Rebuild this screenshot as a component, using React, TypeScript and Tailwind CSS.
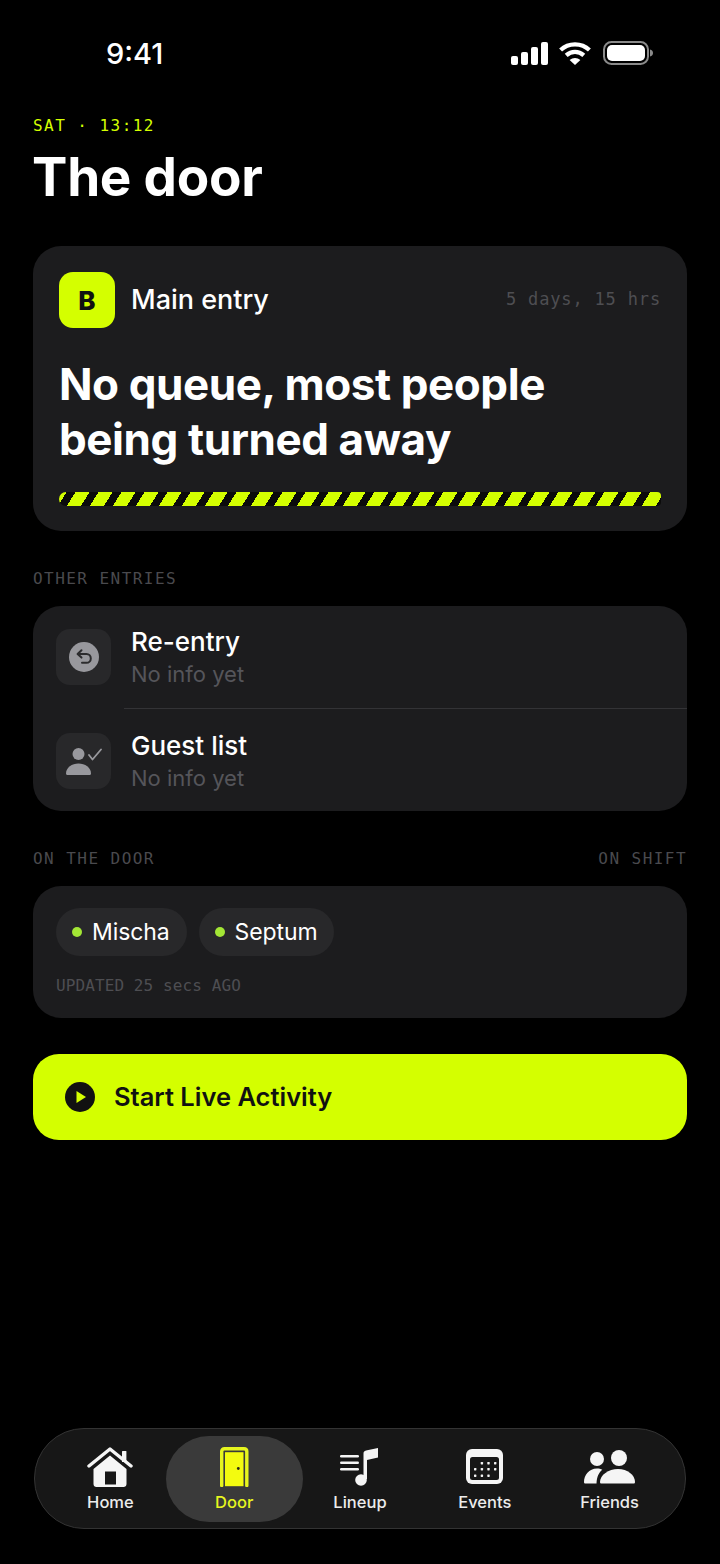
import React from "react";

const sans = "font-['Inter','Liberation_Sans',sans-serif]";
const mono = "font-['DejaVu_Sans_Mono','Liberation_Mono',monospace]";

const StatusIcons = () => (
  <div className="flex items-center gap-[11px]">
    <svg width="37" height="23" viewBox="0 0 37 23" fill="#fff">
      <rect x="0" y="14" width="7" height="9" rx="2" />
      <rect x="10" y="10" width="7" height="13" rx="2" />
      <rect x="20" y="5" width="7" height="18" rx="2" />
      <rect x="30" y="0" width="7" height="23" rx="2" />
    </svg>
    <svg width="32" height="23" viewBox="0 0 32 23" fill="none" stroke="#fff" strokeWidth="4.2">
      <path d="M1.6 8 C9.5 0.4 22.5 0.4 30.4 8" />
      <path d="M7.2 13.4 C12.4 8.6 19.6 8.6 24.8 13.4" />
      <path d="M16 23 L10.6 17.9 C13.8 15.2 18.2 15.2 21.4 17.9 Z" fill="#fff" stroke="none" />
    </svg>
    <svg width="50" height="24" viewBox="0 0 50 24" fill="none" className="ml-[1px]">
      <rect x="1" y="1" width="44" height="22" rx="7.5" stroke="#8a8a8a" strokeWidth="2" />
      <rect x="4" y="4" width="38" height="16" rx="5" fill="#fff" />
      <path d="M47 8.5 C49 9 50 10.4 50 12 C50 13.6 49 15 47 15.5 Z" fill="#8a8a8a" />
    </svg>
  </div>
);

const ReentryIcon = () => (
  <svg width="30" height="30" viewBox="0 0 30 30" fill="none">
    <circle cx="15" cy="15" r="15" fill="#98989d" />
    <path
      d="M12.5 8.2 L8.6 12 L12.5 15.6 M9 12 H17.4 C20 12 21.8 14 21.8 16.4 C21.8 18.9 20 20.8 17.4 20.8 H13"
      stroke="#2c2c2e"
      strokeWidth="2"
      strokeLinecap="round"
      strokeLinejoin="round"
    />
  </svg>
);

const GuestIcon = () => (
  <svg width="36" height="28" viewBox="0 0 36 28" fill="#98989d">
    <circle cx="12.5" cy="7" r="6" />
    <path d="M0 26.5 C0 20.5 6 16.5 12.5 16.5 C19 16.5 25 20.5 25 26.5 C25 27.4 24.5 28 23.5 28 H1.5 C0.5 28 0 27.4 0 26.5 Z" />
    <path d="M23 8 L26.5 12.5 L35 2.5" fill="none" stroke="#98989d" strokeWidth="1.8" strokeLinecap="round" strokeLinejoin="round" />
  </svg>
);

const HomeIcon = () => (
  <svg width="46" height="40" viewBox="0 0 46 40" fill="#f5f5f5">
    <path d="M2 19 L23 2 L44 19" fill="none" stroke="#f5f5f5" strokeWidth="3.4" strokeLinecap="round" strokeLinejoin="round" />
    <rect x="35" y="4" width="4.4" height="11" rx="0.5" />
    <path fillRule="evenodd" d="M23 8.5 L39.5 22 V37 C39.5 38.7 38.2 40 36.5 40 H9.5 C7.8 40 6.5 38.7 6.5 37 V22 Z M18 24.5 V37.5 H29 V24.5 Z" />
  </svg>
);

const DoorIcon = () => (
  <svg width="29" height="40" viewBox="0 0 29 40" fill="none">
    <path d="M1.7 38.5 V4.5 C1.7 2.8 2.8 1.7 4.5 1.7 H24 C25.7 1.7 26.8 2.8 26.8 4.5 V38.5" stroke="#e6f51f" strokeWidth="3.4" strokeLinecap="round" />
    <rect x="5" y="5.2" width="18.5" height="34" fill="#f3fb0f" />
    <circle cx="18.3" cy="21.5" r="1.4" fill="#2a2a1a" />
  </svg>
);

const LineupIcon = () => (
  <svg width="40" height="38" viewBox="0 0 40 38" fill="#f5f5f5">
    <rect x="0" y="7" width="19" height="2.4" rx="1.2" />
    <rect x="0" y="13.5" width="19" height="2.4" rx="1.2" />
    <rect x="0" y="20" width="19" height="2.4" rx="1.2" />
    <ellipse cx="21" cy="32" rx="5.8" ry="5.8" />
    <path d="M23.5 31 V5.5 C23.5 4 24.5 3 26 2.6 L38 0 V9.5 L27 12 V31 Z" />
  </svg>
);

const EventsIcon = () => {
  const dots = [
    [14.7, 13], [21.3, 13], [28, 13],
    [8, 19], [14.7, 19], [21.3, 19], [28, 19],
    [8, 25.5], [14.7, 25.5], [21.3, 25.5],
  ];
  return (
    <svg width="38" height="35" viewBox="0 0 38 35" fill="none">
      <rect x="0" y="0" width="37" height="35" rx="6" fill="#f5f5f5" />
      <rect x="4" y="8" width="29" height="23" rx="2.5" fill="#171717" />
      {dots.map(([x, y]) => (
        <rect key={`${x}-${y}`} x={x} y={y} width="2.4" height="2.4" rx="0.6" fill="#f5f5f5" />
      ))}
    </svg>
  );
};

const FriendsIcon = () => (
  <svg width="52" height="34" viewBox="0 0 52 34" fill="#f5f5f5">
    <circle cx="13" cy="9" r="7" />
    <circle cx="35" cy="8" r="8" />
    <path d="M0 32 C0 25 5 18.5 13 18.5 C15 18.5 16.8 19 18.3 19.8 C15 22.5 12.8 26.5 12.5 33.5 H1.5 C0.6 33.5 0 33 0 32 Z" />
    <path d="M16 32 C16 25 24.5 19 34 19 C43.5 19 51 25 51 32 C51 33 50.4 33.5 49.5 33.5 H17.5 C16.6 33.5 16 33 16 32 Z" />
  </svg>
);

const navItems = [
  { label: "Home", icon: <HomeIcon /> },
  { label: "Door", icon: <DoorIcon />, active: true },
  { label: "Lineup", icon: <LineupIcon /> },
  { label: "Events", icon: <EventsIcon /> },
  { label: "Friends", icon: <FriendsIcon /> },
];

const entries = [
  { name: "Re-entry", icon: <ReentryIcon />, row: "h-[102px]" },
  { name: "Guest list", icon: <GuestIcon />, row: "h-[103px] pt-[3px]" },
];

const App = () => {
  return (
    <div className={`${sans} min-h-[1564px] w-[720px] bg-black text-white flex flex-col`}>
      <div className="flex items-center justify-between h-[54px] mt-[26px] pl-[106px] pr-[67px]">
        <span className="text-[29px] font-medium leading-none">9:41</span>
        <StatusIcons />
      </div>

      <div className="px-[33px] mt-[35px] flex flex-col">
        <div className={`${mono} text-[16px] leading-[20px] mt-[1px] tracking-[1.45px] text-[#d4ff00]`}>SAT · 13:12</div>
        <h1 className="text-[53px] font-bold leading-[62px] mt-[10px] tracking-[-0.25px] -ml-[1px]">The door</h1>

        <div className="mt-[38px] h-[285px] rounded-[28px] bg-[#1c1c1e] pt-[26px] px-[26px]">
          <div className="flex items-center">
            <div className="w-[56px] h-[56px] rounded-[14px] bg-[#d4ff00] flex items-center justify-center text-[#111] text-[26px] font-extrabold">
              B
            </div>
            <span className="ml-[16px] text-[27px] font-medium">Main entry</span>
            <span className={`${mono} ml-auto text-[17px] tracking-[0.84px] text-[#4e4e52]`}>5 days, 15 hrs</span>
          </div>
          <div className="mt-[29px] text-[44px] leading-[55px] font-bold tracking-[-0.42px]">
            No queue, most people
            <br />
            being turned away
          </div>
          <div className="mt-[25px] h-[14px] rounded-l-[7px] rounded-r-[4px] bg-[repeating-linear-gradient(122deg,#d4ff00_0px,#d4ff00_6.5px,#0b0b0b_6.5px,#0b0b0b_14px,#d4ff00_14px,#d4ff00_19.5px)]" />
        </div>

        <div className={`${mono} mt-[38px] text-[16px] leading-[20px] tracking-[1.45px] text-[#4a4a4e]`}>OTHER ENTRIES</div>
        <div className="mt-[17px] h-[205px] rounded-[28px] bg-[#1c1c1e] flex flex-col overflow-hidden">
          {entries.map((entry, idx) => (
            <div key={entry.name} className={`flex relative items-center pl-[23px] ${entry.row}`}>
              <div className="w-[55px] h-[56px] rounded-[14px] bg-[#28282a] flex items-center justify-center">
                {entry.icon}
              </div>
              <div className="ml-[20px] flex flex-col">
                <span className="text-[26px] leading-[33px] font-medium">{entry.name}</span>
                <span className="text-[22px] leading-[32px] text-[#55555a]">No info yet</span>
              </div>
              {idx === 0 && <div className="absolute left-[91px] right-0 -bottom-px h-px bg-[#333336]" />}
            </div>
          ))}
        </div>

        <div className={`${mono} mt-[38px] text-[16px] leading-[20px] tracking-[1.45px] text-[#4a4a4e] flex justify-between`}>
          <span>ON THE DOOR</span>
          <span>ON SHIFT</span>
        </div>
        <div className="mt-[17px] h-[132px] rounded-[28px] bg-[#1c1c1e] pt-[22px] px-[23px]">
          <div className="flex gap-[12px]">
            {["Mischa", "Septum"].map((name) => (
              <div key={name} className="h-[48px] rounded-full bg-[#28282a] flex items-center pl-[16px] pr-[17px]">
                <span className="w-[10px] h-[10px] rounded-full bg-[#a3e635]" />
                <span className="ml-[10px] text-[23px] tracking-[-0.1px] font-normal">{name}</span>
              </div>
            ))}
          </div>
          <div className={`${mono} mt-[20px] text-[16px] leading-[20px] tracking-[0.1px] text-[#4e4e52]`}>UPDATED 25 secs AGO</div>
        </div>

        <div className="mt-[36px] h-[86px] rounded-[26px] bg-[#d4ff00] flex items-center pl-[32px] text-[#111]">
          <svg width="30" height="30" viewBox="0 0 30 30">
            <circle cx="15" cy="15" r="15" fill="#111" />
            <path d="M11.5 9 L21 15 L11.5 21 Z" fill="#d4ff00" />
          </svg>
          <span className="ml-[19px] text-[25.5px] font-semibold">Start Live Activity</span>
        </div>
      </div>

      <div className="mt-auto mb-[35px] mx-[34px] h-[101px] rounded-[50px] bg-[#171717] border border-[#333] flex items-center px-[13px]">
        {navItems.map((item) => (
          <div
            key={item.label}
            className={`h-[86px] rounded-[43px] flex flex-col items-center justify-end pb-[9px] ${item.active ? "w-[137px] -ml-[7px] -mr-[5px] bg-[#3a3a3a]" : "w-[125px]"}`}
          >
            <div className="h-[40px] flex items-center justify-center">{item.icon}</div>
            <span className={`mt-[4px] text-[16.5px] leading-[22px] font-medium ${item.active ? "text-[#e6f51f]" : "text-[#ececec]"}`}>
              {item.label}
            </span>
          </div>
        ))}
      </div>
    </div>
  );
};

export default App;
